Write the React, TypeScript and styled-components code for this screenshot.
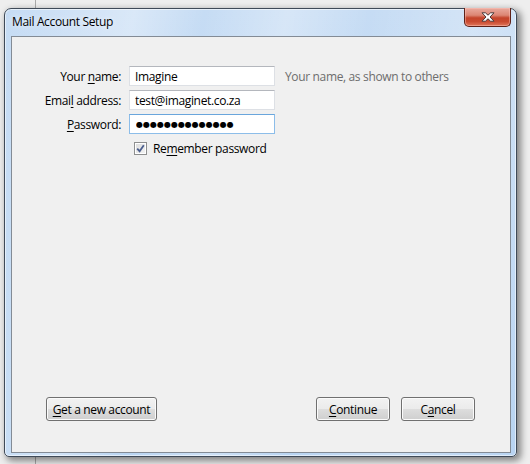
import React from "react";
import styled, { createGlobalStyle } from "styled-components";

const GlobalStyle = createGlobalStyle`
  html, body { margin: 0; padding: 0; }
  body {
    font-family: "Open Sans", "Noto Sans", sans-serif;
    font-size: 12px;
    letter-spacing: -0.35px;
    color: #000;
    background: #ededed;
  }
`;

const Desktop = styled.div`
  width: 530px;
  height: 464px;
  overflow: hidden;
  box-sizing: border-box;
  padding: 8px 0 0 4px;
  background: linear-gradient(to right, #eeeeee 0 35px, #a9a9a9 35px 36px, #eeeeee 36px 100%);
`;

const Window = styled.div`
  width: 513px;
  height: 449px;
  box-sizing: border-box;
  border: 1px solid #3f4a58;
  border-radius: 7px 7px 5px 5px;
  padding: 0 5px 3px 6px;
  display: flex;
  flex-direction: column;
  background:
    linear-gradient(100deg, rgba(255,255,255,0) 0%, rgba(255,255,255,0.35) 22%, rgba(255,255,255,0) 34%, rgba(255,255,255,0.3) 48%, rgba(255,255,255,0) 62%, rgba(255,255,255,0.25) 80%, rgba(255,255,255,0) 100%),
    linear-gradient(180deg, #c6dcf4 0%, #b8d4f2 100%);
  box-shadow: inset 0 0 0 1px rgba(255,255,255,0.55), 3px 3px 7px 1px rgba(0,0,0,0.45);
`;

const TitleBar = styled.div`
  height: 27px;
  flex: none;
  display: flex;
  align-items: flex-start;
  justify-content: space-between;
  padding-left: 1px;
`;

const Title = styled.div`
  margin-top: 5px;
  line-height: 16px;
  font-size: 12px;
  color: #000;
  text-shadow: 0 0 6px rgba(255,255,255,0.9);
`;

const CloseButton = styled.div`
  width: 47px;
  height: 19px;
  margin-top: -1px;
  box-sizing: border-box;
  border: 1px solid #5e2118;
  border-top: none;
  border-radius: 0 0 5px 5px;
  display: flex;
  align-items: center;
  justify-content: center;
  background: linear-gradient(180deg, #e9aa9e 0%, #dc8674 40%, #c4442b 55%, #c94a30 75%, #e0765a 100%);
  box-shadow: inset 0 0 0 1px rgba(255,200,190,0.45);
`;

const Client = styled.div`
  flex: 1;
  box-sizing: border-box;
  border: 1px solid #838b95;
  background: #f0f0f0;
  display: flex;
  flex-direction: column;
  justify-content: space-between;
  padding: 29px 0 31px 0;
`;

const Form = styled.div`
  display: grid;
  grid-template-columns: 109px 146px auto;
  grid-auto-rows: 20px;
  column-gap: 8px;
  row-gap: 4px;
  align-items: center;
`;

const Label = styled.label`
  text-align: right;
  white-space: nowrap;
  color: #000;
`;

const Key = styled.span`
  text-decoration: underline;
  text-underline-offset: 2px;
`;

const Field = styled.input<{ $focused?: boolean }>`
  width: 146px;
  height: 20px;
  box-sizing: border-box;
  margin: 0;
  padding: 0 5px;
  font-family: "Open Sans", "Noto Sans", sans-serif;
  font-size: 12px;
  letter-spacing: -0.35px;
  color: #000;
  background: #fff;
  outline: none;
  border: 1px solid ${(p) => (p.$focused ? "#8cbde9" : "#dde0e5")};
  border-top-color: ${(p) => (p.$focused ? "#6aa6dc" : "#b4b7bd")};
`;

const DotsField = styled(Field)`
  font-family: "DejaVu Sans", sans-serif;
  font-size: 8px;
  letter-spacing: 0px;
  padding-left: 6px;
`;

const Hint = styled.span`
  margin-left: 2px;
  color: #6d6d6d;
  white-space: nowrap;
`;

const CheckRow = styled.div`
  grid-column: 2 / span 2;
  display: flex;
  align-items: center;
  gap: 6px;
  padding-left: 5px;
  padding-top: 1px;
`;

const CheckBox = styled.span`
  width: 13px;
  height: 13px;
  box-sizing: border-box;
  border: 1px solid #8e8f8f;
  background: linear-gradient(135deg, #dcdcdc 0%, #f4f4f4 100%);
  box-shadow: inset 0 0 0 1px #ffffff;
  display: flex;
  align-items: center;
  justify-content: center;
`;

const ButtonRow = styled.div`
  display: flex;
  justify-content: space-between;
  padding: 0 35px 0 34px;
`;

const ButtonGroup = styled.div`
  display: flex;
  gap: 11px;
`;

const Button = styled.button<{ $width: number }>`
  width: ${(p) => p.$width}px;
  height: 24px;
  margin: 0;
  padding: 0;
  box-sizing: border-box;
  border: 1px solid #707070;
  border-radius: 3px;
  font-family: "Open Sans", "Noto Sans", sans-serif;
  font-size: 12px;
  letter-spacing: -0.35px;
  color: #000;
  background: linear-gradient(180deg, #f2f2f2 0%, #ebebeb 50%, #dddddd 51%, #cfcfcf 100%);
  box-shadow: inset 0 0 0 1px #fbfbfb;
`;

export default function App() {
  return (
    <>
      <GlobalStyle />
      <Desktop>
        <Window>
          <TitleBar>
            <Title>Mail Account Setup</Title>
            <CloseButton>
              <svg width="14" height="10" viewBox="0 0 14 10">
                <path
                  d="M1 0.8 L4.4 0.8 L7 3.2 L9.6 0.8 L13 0.8 L9 5 L13 9.2 L9.6 9.2 L7 6.8 L4.4 9.2 L1 9.2 L5 5 Z"
                  fill="#ffffff"
                  stroke="#4a3a3a"
                  strokeWidth="1"
                  strokeLinejoin="round"
                />
              </svg>
            </CloseButton>
          </TitleBar>
          <Client>
            <Form>
              <Label>
                Your <Key>n</Key>ame:
              </Label>
              <Field readOnly value="Imagine" />
              <Hint>Your name, as shown to others</Hint>
              <Label>
                Emai<Key>l</Key> address:
              </Label>
              <Field readOnly value="test@imaginet.co.za" />
              <span />
              <Label>
                <Key>P</Key>assword:
              </Label>
              <DotsField readOnly $focused value={"●".repeat(14)} />
              <span />
              <CheckRow>
                <CheckBox>
                  <svg width="9" height="9" viewBox="0 0 9 9">
                    <path d="M1.2 4.6 L3.6 7.2 L7.8 1.2" fill="none" stroke="#4c5f8e" strokeWidth="1.8" />
                  </svg>
                </CheckBox>
                <span>
                  Re<Key>m</Key>ember password
                </span>
              </CheckRow>
            </Form>
            <ButtonRow>
              <Button $width={111}>
                <Key>G</Key>et a new account
              </Button>
              <ButtonGroup>
                <Button $width={74}>
                  <Key>C</Key>ontinue
                </Button>
                <Button $width={74}>
                  C<Key>a</Key>ncel
                </Button>
              </ButtonGroup>
            </ButtonRow>
          </Client>
        </Window>
      </Desktop>
    </>
  );
}
